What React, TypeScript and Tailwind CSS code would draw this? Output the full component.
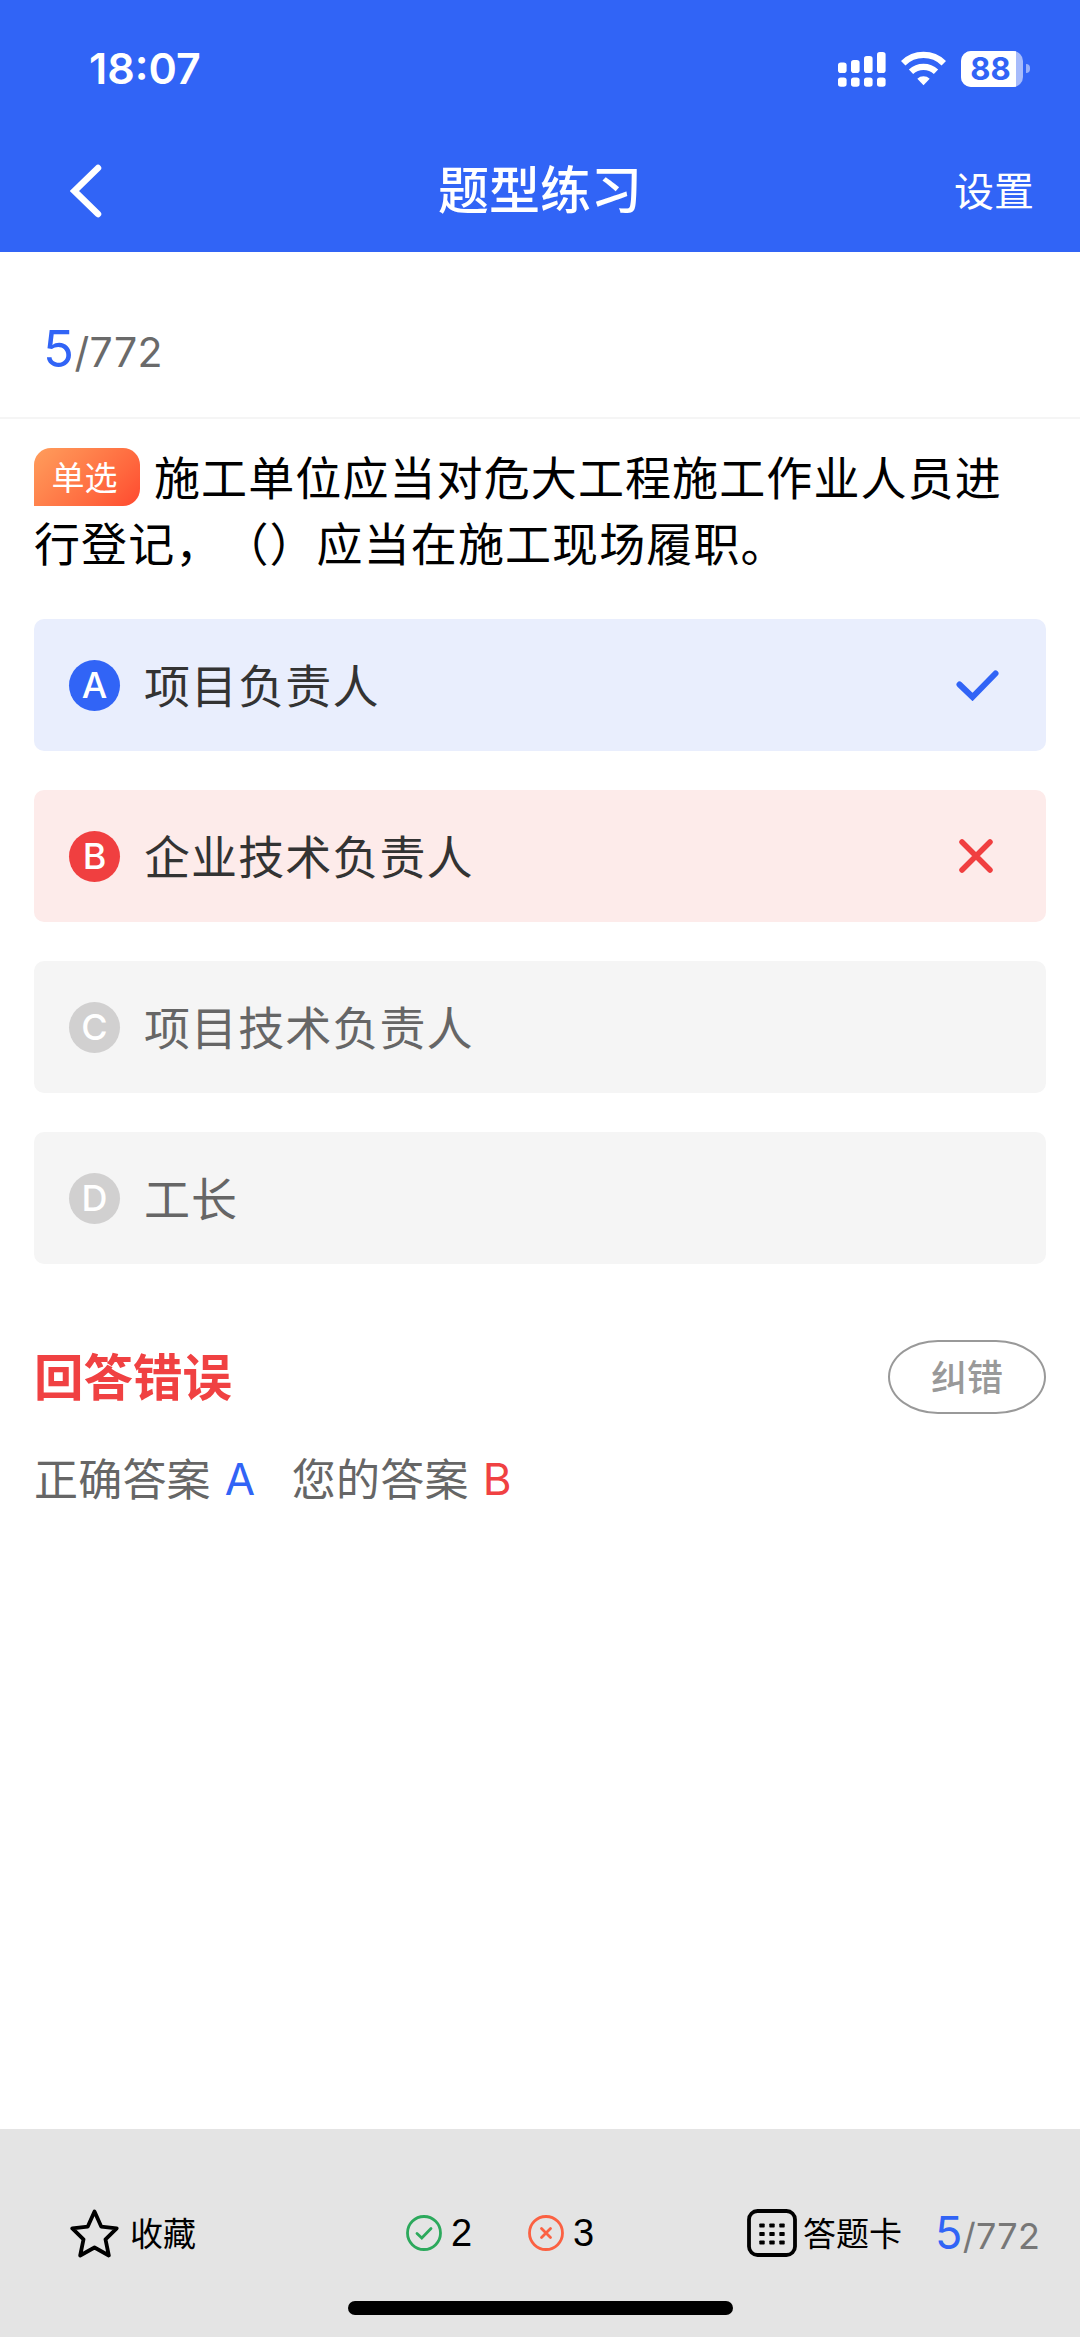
import clsx from 'clsx';

type Status = 'correct' | 'wrong' | 'idle';

const options: { key: string; text: string; status: Status }[] = [
  { key: 'A', text: '项目负责人', status: 'correct' },
  { key: 'B', text: '企业技术负责人', status: 'wrong' },
  { key: 'C', text: '项目技术负责人', status: 'idle' },
  { key: 'D', text: '工长', status: 'idle' },
];

const Signal = () => (
  <svg width="48" height="36" viewBox="0 0 48 36" fill="#fff">
    <rect x="0" y="11.5" width="8.6" height="10.5" rx="2.8" />
    <rect x="13" y="9" width="8.6" height="13" rx="2.8" />
    <rect x="26" y="5" width="8.6" height="17" rx="2.8" />
    <rect x="39" y="1" width="8.6" height="21" rx="2.8" />
    <rect x="0" y="26.5" width="8.6" height="9.3" rx="2.8" />
    <rect x="13" y="26.5" width="8.6" height="9.3" rx="2.8" />
    <rect x="26" y="26.5" width="8.6" height="9.3" rx="2.8" />
    <rect x="39" y="26.5" width="8.6" height="9.3" rx="2.8" />
  </svg>
);

const Wifi = () => (
  <svg width="45" height="36" viewBox="0 0 45 36">
    <path d="M2.2 12.2a29 29 0 0 1 40.6 0" fill="none" stroke="#fff" strokeWidth="6.4" />
    <path d="M10 20.8a18.2 18.2 0 0 1 25 0" fill="none" stroke="#fff" strokeWidth="6.2" />
    <path d="M22.5 34.2l-6.2-6.4a9 9 0 0 1 12.4 0z" fill="#fff" />
  </svg>
);

const Battery = () => (
  <div className="flex items-center gap-[3px]">
    <div className="flex h-9 w-[62px] items-center overflow-hidden rounded-[10px] bg-[#a6bbfb]">
      <div className="flex h-9 w-[55px] items-center justify-center bg-white pl-1 font-[Inter,sans-serif] text-[31px] leading-9 font-bold text-[#3164f6]">
        88
      </div>
    </div>
    <div className="h-[9px] w-1 rounded-r-full bg-[#98b0fa]" />
  </div>
);

const Header = () => (
  <header className="h-[252px] bg-[#3164f6] text-white">
    <div className="flex h-[137px] items-center justify-between pr-[50px] pl-[89px]">
      <span className="font-[Inter,sans-serif] text-[43px] font-semibold">18:07</span>
      <div className="flex items-center gap-[15px]">
        <Signal />
        <Wifi />
        <Battery />
      </div>
    </div>
    <div className="grid h-[107px] grid-cols-3 items-center pr-[46px] pl-[70px]">
      <svg width="32" height="54" viewBox="0 0 32 54" fill="none" stroke="#fff" strokeWidth="6.5" strokeLinecap="round">
        <path d="M28 4L4.5 27L28 50" />
      </svg>
      <h1 className="-ml-6 pb-2 text-center text-[51px] leading-[60px] font-medium whitespace-nowrap">题型练习</h1>
      <span className="pb-1 text-right text-[40px] leading-[60px]">设置</span>
    </div>
  </header>
);

const Badge = ({ label, status }: { label: string; status: Status }) => (
  <span
    className={clsx(
      'flex size-[51px] shrink-0 items-center justify-center rounded-full font-[Inter,sans-serif] text-[36px] leading-none font-medium text-white',
      status === 'correct' && 'bg-[#3164f6]',
      status === 'wrong' && 'bg-[#f03f40]',
      status === 'idle' && 'bg-[#d1d0d0]',
    )}
  >
    {label}
  </span>
);

const Option = ({ label, text, status }: { label: string; text: string; status: Status }) => (
  <li
    className={clsx(
      'flex h-[132px] items-center rounded-[10px] pl-[35px]',
      status === 'correct' && 'bg-[#e9eefd] pr-[47px] text-[#333]',
      status === 'wrong' && 'bg-[#fdebea] pr-[53px] text-[#333]',
      status === 'idle' && 'bg-[#f5f5f5] text-[#666]',
    )}
  >
    <Badge label={label} status={status} />
    <span className="ml-6 flex-1 pb-[5px] text-[46px] leading-[66px] tracking-[1.1px]">{text}</span>
    {status === 'correct' && (
      <svg width="43" height="31" viewBox="0 0 43 31" fill="none" stroke="#3164f6" strokeWidth="6" strokeLinecap="round">
        <path d="M3.5 14.5L16.5 27L39.5 3.5" />
      </svg>
    )}
    {status === 'wrong' && (
      <svg width="34" height="34" viewBox="0 0 34 34" fill="none" stroke="#f03f40" strokeWidth="5.5" strokeLinecap="round">
        <path d="M3 3L31 31M31 3L3 31" />
      </svg>
    )}
  </li>
);

const Toolbar = () => (
  <footer className="flex h-[208px] flex-col items-center bg-[#e4e4e4] text-black">
    <div className="flex h-[172px] w-full items-center pt-[36px] pl-[70px] text-[33px] leading-[48px]">
      <div className="flex w-[336px] items-center gap-[11px]">
        <svg width="49" height="49" viewBox="0 0 49 49" fill="none" stroke="#000" strokeWidth="3.8" strokeLinejoin="round">
          <path d="M24.5 2.5L31.2 17.6L46.7 19.4L35.5 30.3L38.8 46.5L24.5 38.5L10.2 46.5L13.5 30.3L2.3 19.4L17.8 17.6Z" />
        </svg>
        <span className="pb-0.5">收藏</span>
      </div>
      <div className="flex w-[122px] items-center gap-[9px]">
        <svg width="36" height="36" viewBox="0 0 36 36" fill="none" stroke="#2ca95c" strokeWidth="2.8" strokeLinecap="round">
          <circle cx="18" cy="18" r="16.5" />
          <path d="M11 18.5L15.8 23L25 13.5" />
        </svg>
        <span className="font-[Liberation_Sans,Arial,sans-serif] text-[38px]">2</span>
      </div>
      <div className="flex w-[219px] items-center gap-[9px]">
        <svg width="36" height="36" viewBox="0 0 36 36" fill="none" stroke="#fb6142" strokeWidth="2.8" strokeLinecap="round">
          <circle cx="18" cy="18" r="16.5" />
          <path d="M13.5 13.5L22.5 22.5M22.5 13.5L13.5 22.5" />
        </svg>
        <span className="font-[Liberation_Sans,Arial,sans-serif] text-[38px]">3</span>
      </div>
      <div className="flex w-[188px] items-center gap-[6px]">
        <svg width="50" height="48" viewBox="0 0 50 48" className="shrink-0">
          <rect x="2" y="2" width="46" height="44" rx="8.5" fill="none" stroke="#000" strokeWidth="3.8" />
          {[16.5, 25, 33.5].map((y) =>
            [15, 25, 35].map((x) => <rect key={`${x}-${y}`} x={x - 2.7} y={y - 2.1} width="5.4" height="4.2" rx="0.8" />),
          )}
        </svg>
        <span className="pb-0.5 whitespace-nowrap">答题卡</span>
      </div>
      <div className="pt-[3px] font-[Inter,sans-serif] text-[36px] tracking-[0.3px] text-[#777]">
        <span className="text-[45px] text-[#3164f6]">5</span>/772
      </div>
    </div>
    <div className="h-[14px] w-[385px] rounded-full bg-black" />
  </footer>
);

export default function App() {
  return (
    <div className="flex h-[2337px] w-[1080px] flex-col bg-white font-['Noto_Sans_CJK_SC',sans-serif] text-black">
      <Header />
      <div className="h-[167px] border-b-2 border-[#f5f5f5] pt-[65px] pl-[43px] font-[Inter,sans-serif] text-[41px] leading-[64px] tracking-[0.4px] text-[#6a6a6a]">
        <span className="text-[51px] text-[#3164f6]">5</span>/772
      </div>
      <main className="flex-1 px-[34px]">
        <div className="mt-[23px] text-[46px] leading-[66px] tracking-[1.1px] [text-spacing-trim:space-all]">
          <span className="mt-[6px] mr-[14px] inline-block h-[58px] w-[106px] rounded-[17px] rounded-bl-none bg-linear-135 from-[#ff9d5c] to-[#ff482f] pr-[5px] text-center align-top text-[33px] leading-[56px] tracking-normal text-white">
            单选
          </span>
          施工单位应当对危大工程施工作业人员进行登记，（）应当在施工现场履职。
        </div>
        <ul className="mt-[45px] flex flex-col gap-[39px]">
          {options.map((o) => (
            <Option key={o.key} label={o.key} text={o.text} status={o.status} />
          ))}
        </ul>
        <div className="mt-[74px] flex items-center justify-between">
          <h2 className="pb-1 text-[49.5px] leading-[73px] font-bold text-[#f04142]">回答错误</h2>
          <button className="h-[74px] w-[158px] rounded-[50px/37px] border-2 border-[#999] pb-1 text-[36px] leading-none font-medium text-[#999]">
            纠错
          </button>
        </div>
        <div className="mt-[30px] flex text-[44px] leading-[64px] tracking-[0.2px] text-[#666]">
          <span>正确答案</span>
          <span className="ml-[14px] w-[31px] pt-0.5 font-[Inter,sans-serif] text-[#3164f6]">A</span>
          <span className="ml-[36px]">您的答案</span>
          <span className="ml-[14px] pt-0.5 font-[Inter,sans-serif] text-[#f04142]">B</span>
        </div>
      </main>
      <Toolbar />
    </div>
  );
}
